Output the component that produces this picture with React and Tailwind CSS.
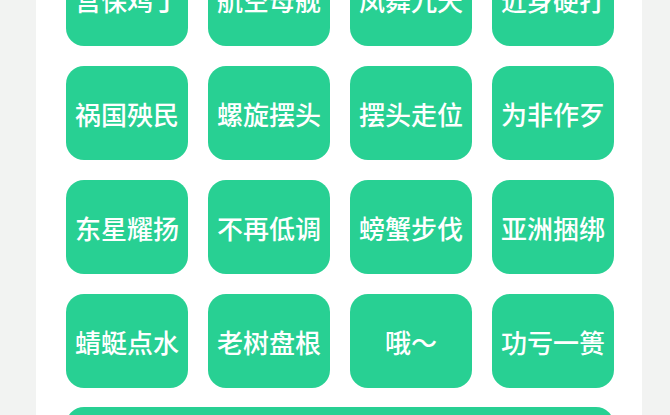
const moves = [
  '宫保鸡丁', '航空母舰', '凤舞九天', '近身硬打',
  '祸国殃民', '螺旋摆头', '摆头走位', '为非作歹',
  '东星耀扬', '不再低调', '螃蟹步伐', '亚洲捆绑',
  '蜻蜓点水', '老树盘根', '哦～', '功亏一篑',
];

function App() {
  return (
    <div className="h-[415px] overflow-hidden bg-[#f2f3f2] font-['Noto_Sans_CJK_SC',sans-serif]">
      <div className="-mt-[48px] ml-[36px] w-[606px] bg-white pl-[30px]">
        <div className="grid grid-cols-[repeat(4,122px)] gap-x-[20px] gap-y-[20px]">
          {moves.map((m) => (
            <div
              key={m}
              className="flex h-[94px] items-center justify-center rounded-[18px] bg-[#28d093] text-[26px] font-medium text-white"
            >
              {m}
            </div>
          ))}
        </div>
        <div className="mt-[19px] h-[94px] w-[548px] rounded-[18px] bg-[#28d093]" />
      </div>
    </div>
  );
}

export default App;
